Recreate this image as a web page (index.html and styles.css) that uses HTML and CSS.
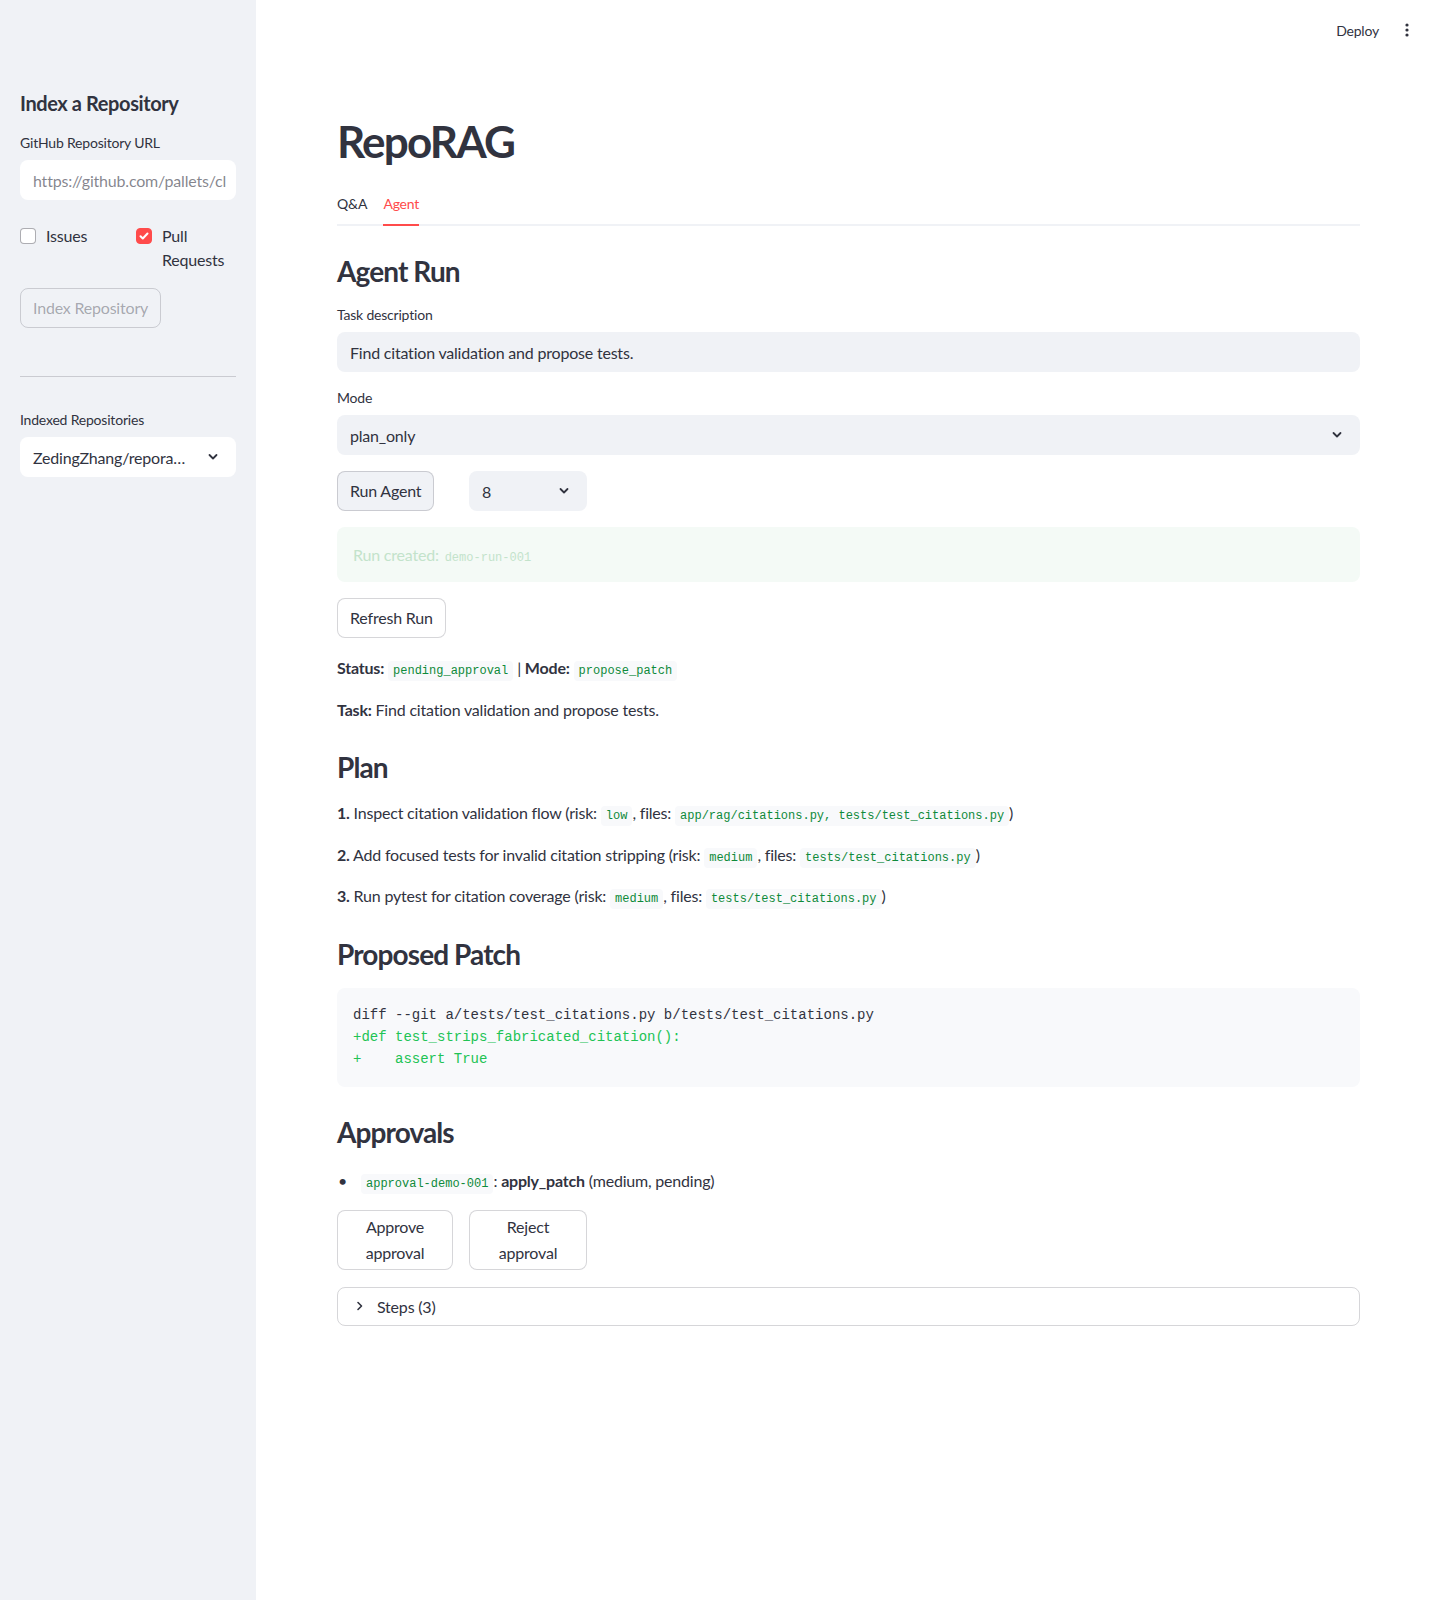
FILE: index.html
```html
<!DOCTYPE html>
<html lang="en">
<head>
    <meta charset="UTF-8">
    <title>RepoRAG</title>
    <link rel="stylesheet" href="styles.css">
</head>
<body>
<div class="app">
    <aside class="sidebar">
        <h3 class="side-title">Index a Repository</h3>
        <label class="field-label">GitHub Repository URL</label>
        <div class="text-input white"><span class="placeholder">https://github.com/pallets/cl</span></div>

        <div class="checks">
            <div class="check">
                <span class="box"></span>
                <span>Issues</span>
            </div>
            <div class="check">
                <span class="box checked">
                    <svg width="12" height="12" viewBox="0 0 12 12"><path d="M2.5 6.2l2.3 2.3 4.7-5" fill="none" stroke="#fff" stroke-width="2" stroke-linecap="round" stroke-linejoin="round"/></svg>
                </span>
                <span>Pull<br>Requests</span>
            </div>
        </div>

        <button class="btn disabled">Index Repository</button>

        <hr class="side-rule">

        <label class="field-label">Indexed Repositories</label>
        <div class="select white">
            <span>ZedingZhang/repora…</span>
            <svg class="chev" width="16" height="16" viewBox="0 0 16 16"><path d="M4.5 6l3.5 3.5L11.5 6" fill="none" stroke="#31333f" stroke-width="1.8" stroke-linecap="round" stroke-linejoin="round"/></svg>
        </div>
    </aside>

    <main class="main">
        <header class="topbar">
            <span class="deploy">Deploy</span>
            <svg width="16" height="16" viewBox="0 0 16 16"><circle cx="8" cy="3" r="1.6" fill="#31333f"/><circle cx="8" cy="8" r="1.6" fill="#31333f"/><circle cx="8" cy="13" r="1.6" fill="#31333f"/></svg>
        </header>

        <div class="content">
            <h1 class="title">RepoRAG</h1>

            <div class="tabs">
                <span class="tab">Q&amp;A</span>
                <span class="tab active">Agent</span>
            </div>

            <h3 class="sub">Agent Run</h3>

            <label class="field-label main-label">Task description</label>
            <div class="text-input">Find citation validation and propose tests.</div>

            <label class="field-label">Mode</label>
            <div class="select">
                <span>plan_only</span>
                <svg class="chev" width="16" height="16" viewBox="0 0 16 16"><path d="M4.5 6l3.5 3.5L11.5 6" fill="none" stroke="#31333f" stroke-width="1.8" stroke-linecap="round" stroke-linejoin="round"/></svg>
            </div>

            <div class="cols">
                <button class="btn gray">Run Agent</button>
                <div class="select small">
                    <span>8</span>
                    <svg class="chev" width="16" height="16" viewBox="0 0 16 16"><path d="M4.5 6l3.5 3.5L11.5 6" fill="none" stroke="#31333f" stroke-width="1.8" stroke-linecap="round" stroke-linejoin="round"/></svg>
                </div>
            </div>

            <div class="success"><span>Run created: <code>demo-run-001</code></span></div>

            <div>
                <button class="btn">Refresh Run</button>
            </div>

            <p class="line first-line"><b>Status:</b> <code>pending_approval</code> | <b>Mode:</b> <code>propose_patch</code></p>
            <p class="line"><b>Task:</b> Find citation validation and propose tests.</p>

            <h3 class="sub">Plan</h3>
            <p class="line"><b>1.</b> Inspect citation validation flow (risk: <code>low</code>, files: <code>app/rag/citations.py, tests/test_citations.py</code>)</p>
            <p class="line"><b>2.</b> Add focused tests for invalid citation stripping (risk: <code>medium</code>, files: <code>tests/test_citations.py</code>)</p>
            <p class="line"><b>3.</b> Run pytest for citation coverage (risk: <code>medium</code>, files: <code>tests/test_citations.py</code>)</p>

            <h3 class="sub">Proposed Patch</h3>
            <pre class="code"><span>diff --git a/tests/test_citations.py b/tests/test_citations.py</span>
<span class="add">+def test_strips_fabricated_citation():</span>
<span class="add">+    assert True</span></pre>

            <h3 class="sub">Approvals</h3>
            <ul class="list">
                <li><code>approval-demo-001</code>: <b>apply_patch</b> (medium, pending)</li>
            </ul>

            <div class="cols">
                <button class="btn tall">Approve<br>approval</button>
                <button class="btn tall">Reject<br>approval</button>
            </div>

            <div class="expander">
                <svg width="16" height="16" viewBox="0 0 16 16"><path d="M6 4.5l3.5 3.5L6 11.5" fill="none" stroke="#31333f" stroke-width="1.6" stroke-linecap="round" stroke-linejoin="round"/></svg>
                <span>Steps (3)</span>
            </div>
        </div>
    </main>
</div>
</body>
</html>
```
FILE: styles.css
```css
* {
    box-sizing: border-box;
}

body {
    margin: 0;
    font-family: Lato, "Open Sans", sans-serif;
    font-size: 16px;
    letter-spacing: -0.2px;
    color: #31333f;
    background-color: #fff;
}

.app {
    display: flex;
    min-height: 1600px;
}

/* barra lateral */
.sidebar {
    width: 256px;
    flex-shrink: 0;
    background-color: #f0f2f6;
    padding: 88px 20px 0 20px;
}

.side-title {
    font-size: 20px;
    font-weight: 700;
    margin: 0 0 15px 0;
    line-height: 30px;
    letter-spacing: -0.4px;
}

.field-label {
    display: block;
    font-size: 14px;
    line-height: 20px;
    margin-bottom: 7px;
}

.main-label {
    margin-top: 16px;
}

.text-input, .select {
    height: 40px;
    border-radius: 8px;
    background-color: #f0f2f6;
    padding: 0 13px;
    display: flex;
    align-items: center;
    white-space: nowrap;
    overflow: hidden;
    margin-bottom: 16px;
}

.white {
    background-color: #fff;
}

.placeholder {
    color: rgba(49, 51, 63, 0.6);
}

.select {
    justify-content: space-between;
}

.select .chev {
    flex-shrink: 0;
    margin-right: 2px;
}

.select.small {
    margin-bottom: 0;
}

.checks {
    display: flex;
    margin-top: 24px;
    margin-bottom: 16px;
}

.check {
    display: flex;
    align-items: flex-start;
    gap: 10px;
    line-height: 24px;
}

.check:first-child {
    width: 116px;
    flex-shrink: 0;
}

.box {
    width: 16px;
    height: 16px;
    margin-top: 4px;
    border: 1px solid rgba(49, 51, 63, 0.4);
    border-radius: 4px;
    background-color: #fff;
    display: flex;
    align-items: center;
    justify-content: center;
    flex-shrink: 0;
}

.box.checked {
    background-color: #ff4b4b;
    border-color: #ff4b4b;
}

.btn {
    font-family: inherit;
    font-size: 16px;
    letter-spacing: -0.2px;
    color: #31333f;
    background-color: #fff;
    border: 1px solid rgba(49, 51, 63, 0.2);
    border-radius: 8px;
    padding: 0 12px;
    height: 40px;
    line-height: 25.6px;
    cursor: pointer;
}

.btn.disabled {
    color: rgba(49, 51, 63, 0.4);
    background-color: transparent;
}

.btn.gray {
    background-color: #f0f2f6;
    justify-self: start;
}

.btn.tall {
    height: 60px;
}

.side-rule {
    border: none;
    border-top: 1px solid rgba(49, 51, 63, 0.2);
    margin: 48px 0 33px 0;
}

/* contenido principal */
.main {
    flex: 1;
}

.topbar {
    height: 60px;
    display: flex;
    align-items: center;
    justify-content: flex-end;
    gap: 20px;
    padding-right: 25px;
    font-size: 14px;
}

.content {
    padding: 56px 80px 0 81px;
}

.title {
    font-size: 44px;
    font-weight: 700;
    margin: 0 0 29px 0;
    line-height: 50px;
    letter-spacing: -1.8px;
}

.tabs {
    display: flex;
    gap: 16px;
    font-size: 14px;
    line-height: 17px;
    border-bottom: 2px solid #f0f2f6;
}

.tab {
    padding-bottom: 12px;
    margin-bottom: -2px;
}

.tab.active {
    color: #ff4b4b;
    border-bottom: 2px solid #ff4b4b;
}

.sub {
    font-size: 28px;
    font-weight: 700;
    margin: 27px 0 15px 0;
    line-height: 36px;
    letter-spacing: -0.9px;
}

.cols {
    display: grid;
    grid-template-columns: 116px 118px;
    gap: 16px;
    margin-bottom: 16px;
}

.success {
    background-color: #f4faf6;
    color: #c3e3cb;
    border-radius: 8px;
    height: 55px;
    padding: 0 16px;
    display: flex;
    align-items: center;
    margin-bottom: 16px;
}

.success code {
    background: none;
    color: #c3e3cb;
    padding: 0 0 0 2px;
}

code {
    font-family: "Liberation Mono", "DejaVu Sans Mono", monospace;
    font-size: 12px;
    line-height: 1;
    letter-spacing: 0;
    color: #0e8a3a;
    background-color: #f8f9fb;
    padding: 3px 5px;
    border-radius: 4px;
}

.line {
    margin: 0;
    line-height: 25.6px;
}

.line + .line {
    margin-top: 16px;
}

.first-line {
    margin-top: 17px;
}

.code {
    font-family: "Liberation Mono", "DejaVu Sans Mono", monospace;
    font-size: 14px;
    line-height: 22px;
    letter-spacing: 0;
    background-color: #f8f9fb;
    border-radius: 8px;
    padding: 16px 16px 17px 16px;
    margin: 16px 0 0 0;
}

.code .add {
    color: #21c354;
}

.list {
    list-style: none;
    margin: 18px 0 16px 0;
    padding: 0;
    line-height: 25.6px;
}

.list li::before {
    content: "•";
    display: inline-block;
    width: 23px;
    padding-left: 1px;
}

.expander {
    border: 1px solid rgba(49, 51, 63, 0.2);
    border-radius: 8px;
    height: 39px;
    margin-top: 17px;
    display: flex;
    align-items: center;
    gap: 9px;
    padding: 0 14px;
}
```
